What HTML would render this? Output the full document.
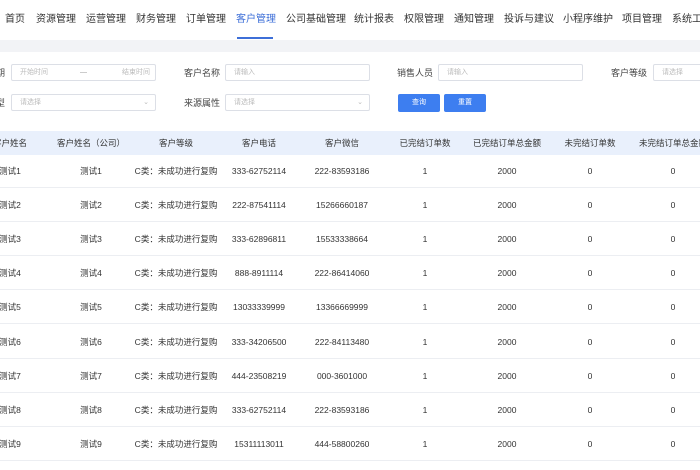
<!DOCTYPE html><html><head><meta charset="utf-8"><style>
body{margin:0;width:700px;height:470px;overflow:hidden;background:#fff;font-family:"Liberation Sans","Noto Sans CJK SC",sans-serif;color:#333;position:relative}
.nav{position:absolute;top:0;left:0;height:40px;width:700px}
.nav span{position:absolute;top:13px;font-size:10px;line-height:14px;color:#333;white-space:nowrap}
.band{position:absolute;top:40px;left:0;width:700px;height:12px;background:#f2f3f6}
.lbl{position:absolute;font-size:9px;line-height:12px;color:#444;white-space:nowrap}
.in{position:absolute;height:17px;border:1px solid #dcdfe6;border-radius:2px;box-sizing:border-box;font-size:7px;color:#bbb;line-height:15px;padding-left:8px;white-space:nowrap}
.btn{position:absolute;top:94px;width:42px;height:18px;background:#3d7ef0;border-radius:2px;color:#fff;font-size:7px;text-align:center;line-height:18px}
.th{position:absolute;top:131px;left:0;width:700px;height:24px;background:#e9f0fc}
.c{position:absolute;transform:translateX(-50%);font-size:8.5px;line-height:12px;white-space:nowrap;color:#333}
.line{position:absolute;left:0;width:700px;height:1px;background:#eceef2}
</style></head><body>
<div class="nav">
<span style="left:5px">首页</span><span style="left:36px">资源管理</span><span style="left:86px">运营管理</span><span style="left:136px">财务管理</span><span style="left:186px">订单管理</span><span style="left:236px;color:#3d6fd8">客户管理</span><span style="left:286px">公司基础管理</span><span style="left:354px">统计报表</span><span style="left:404px">权限管理</span><span style="left:454px">通知管理</span><span style="left:504px">投诉与建议</span><span style="left:563px">小程序维护</span><span style="left:622px">项目管理</span><span style="left:672px">系统工</span>
</div>
<div style="position:absolute;left:237px;top:37px;width:36px;height:2px;background:#3d6fd8"></div>
<div class="band"></div>
<div class="lbl" style="left:-4px;top:67px">期</div>
<div class="in" style="left:11px;top:64px;width:145px">开始时间<span style="position:absolute;left:68px;color:#999">—</span><span style="position:absolute;left:110px">结束时间</span></div>
<div class="lbl" style="left:184px;top:67px">客户名称</div>
<div class="in" style="left:225px;top:64px;width:145px">请输入</div>
<div class="lbl" style="left:397px;top:67px">销售人员</div>
<div class="in" style="left:438px;top:64px;width:145px">请输入</div>
<div class="lbl" style="left:611px;top:67px">客户等级</div>
<div class="in" style="left:653px;top:64px;width:60px">请选择</div>
<div class="lbl" style="left:-4px;top:97px">型</div>
<div class="in" style="left:11px;top:94px;width:145px">请选择<span style="position:absolute;right:6px;color:#bbb">⌄</span></div>
<div class="lbl" style="left:184px;top:97px">来源属性</div>
<div class="in" style="left:225px;top:94px;width:145px">请选择<span style="position:absolute;right:6px;color:#bbb">⌄</span></div>
<div class="btn" style="left:398px">查询</div><div class="btn" style="left:444px">重置</div>
<div class="th"></div>
<div id="t"></div>
<script>
var xs=[10,91,176,259,342,425,507,590,673];
var h=["客户姓名","客户姓名（公司）","客户等级","客户电话","客户微信","已完结订单数","已完结订单总金额","未完结订单数","未完结订单总金额"];
var tel=["333-62752114","222-87541114","333-62896811","888-8911114","13033339999","333-34206500","444-23508219","333-62752114","15311113011"];
var wx=["222-83593186","15266660187","15533338664","222-86414060","13366669999","222-84113480","000-3601000","222-83593186","444-58800260"];
var s="";
for(var i=0;i<9;i++)s+='<div class="c" style="left:'+xs[i]+'px;top:137px">'+h[i]+'</div>';
for(var r=0;r<9;r++){var y=165+r*34.1;
var v=["测试"+(r+1),"测试"+(r+1),"C类：未成功进行复购",tel[r],wx[r],"1","2000","0","0"];
for(var i=0;i<9;i++)s+='<div class="c" style="left:'+xs[i]+'px;top:'+y+'px">'+v[i]+'</div>';
s+='<div class="line" style="top:'+(y+22)+'px"></div>';}
document.getElementById("t").innerHTML=s;
</script>
</body></html>
